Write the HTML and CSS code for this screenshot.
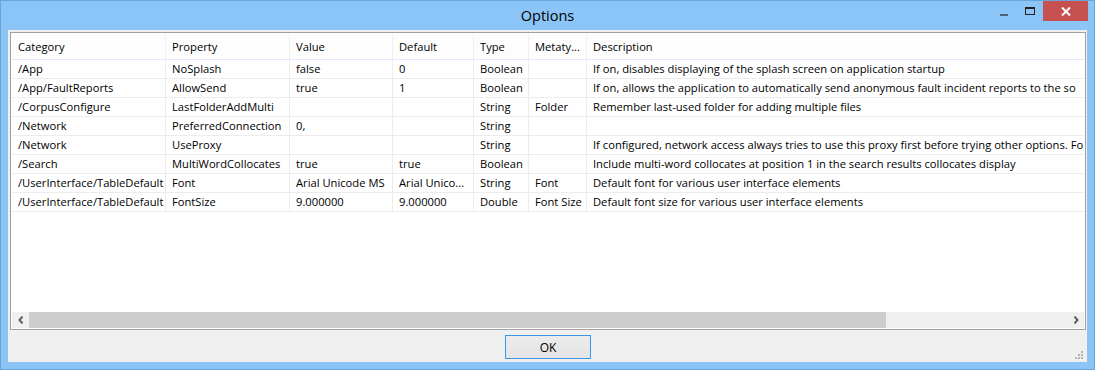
FILE: index.html
```html
<!DOCTYPE html>
<html lang="en">
<head>
  <meta charset="UTF-8" />
  <title>Options</title>
  <link rel="stylesheet" href="styles.css">
</head>
<body>

  <div class="window">

    <!-- TITLE BAR -->
    <div class="titlebar">
      <span></span>
      <span class="title">Options</span>
      <div class="controls">
        <div class="ctl min"><span class="min-bar"></span></div>
        <div class="ctl max"><span class="max-box"></span></div>
        <div class="ctl close">
          <svg width="10" height="9" viewBox="0 0 10 9">
            <path d="M1 0.5 L9 8.5 M9 0.5 L1 8.5" stroke="#fff" stroke-width="2" fill="none"/>
          </svg>
        </div>
      </div>
    </div>

    <!-- CLIENT AREA -->
    <div class="client">
      <div class="frame">
        <div class="table">
          <div class="row head">
            <div class="cell">Category</div>
            <div class="cell">Property</div>
            <div class="cell">Value</div>
            <div class="cell">Default</div>
            <div class="cell">Type</div>
            <div class="cell">Metaty...</div>
            <div class="cell">Description</div>
          </div>
          <div class="row">
            <div class="cell">/App</div>
            <div class="cell">NoSplash</div>
            <div class="cell">false</div>
            <div class="cell">0</div>
            <div class="cell">Boolean</div>
            <div class="cell"></div>
            <div class="cell">If on, disables displaying of the splash screen on application startup</div>
          </div>
          <div class="row">
            <div class="cell">/App/FaultReports</div>
            <div class="cell">AllowSend</div>
            <div class="cell">true</div>
            <div class="cell">1</div>
            <div class="cell">Boolean</div>
            <div class="cell"></div>
            <div class="cell">If on, allows the application to automatically send anonymous fault incident reports to the so</div>
          </div>
          <div class="row">
            <div class="cell">/CorpusConfigure</div>
            <div class="cell">LastFolderAddMulti</div>
            <div class="cell"></div>
            <div class="cell"></div>
            <div class="cell">String</div>
            <div class="cell">Folder</div>
            <div class="cell">Remember last-used folder for adding multiple files</div>
          </div>
          <div class="row">
            <div class="cell">/Network</div>
            <div class="cell">PreferredConnection</div>
            <div class="cell">0,</div>
            <div class="cell"></div>
            <div class="cell">String</div>
            <div class="cell"></div>
            <div class="cell"></div>
          </div>
          <div class="row">
            <div class="cell">/Network</div>
            <div class="cell">UseProxy</div>
            <div class="cell"></div>
            <div class="cell"></div>
            <div class="cell">String</div>
            <div class="cell"></div>
            <div class="cell">If configured, network access always tries to use this proxy first before trying other options. Fo</div>
          </div>
          <div class="row">
            <div class="cell">/Search</div>
            <div class="cell">MultiWordCollocates</div>
            <div class="cell">true</div>
            <div class="cell">true</div>
            <div class="cell">Boolean</div>
            <div class="cell"></div>
            <div class="cell">Include multi-word collocates at position 1 in the search results collocates display</div>
          </div>
          <div class="row">
            <div class="cell">/UserInterface/TableDefault</div>
            <div class="cell">Font</div>
            <div class="cell">Arial Unicode MS</div>
            <div class="cell">Arial Unico...</div>
            <div class="cell">String</div>
            <div class="cell">Font</div>
            <div class="cell">Default font for various user interface elements</div>
          </div>
          <div class="row">
            <div class="cell">/UserInterface/TableDefault</div>
            <div class="cell">FontSize</div>
            <div class="cell">9.000000</div>
            <div class="cell">9.000000</div>
            <div class="cell">Double</div>
            <div class="cell">Font Size</div>
            <div class="cell">Default font size for various user interface elements</div>
          </div>
        </div>

        <!-- HORIZONTAL SCROLLBAR -->
        <div class="hscroll">
          <div class="arrow">
            <svg width="6" height="8" viewBox="0 0 6 8"><path d="M4.5 0.5 L1.5 4 L4.5 7.5" stroke="#606060" stroke-width="2" fill="none"/></svg>
          </div>
          <div class="track"><div class="thumb"></div></div>
          <div class="arrow">
            <svg width="6" height="8" viewBox="0 0 6 8"><path d="M1.5 0.5 L4.5 4 L1.5 7.5" stroke="#606060" stroke-width="2" fill="none"/></svg>
          </div>
        </div>
      </div>

      <div class="buttons">
        <button class="ok">OK</button>
      </div>

      <!-- size grip -->
      <svg class="grip" width="9" height="9" viewBox="0 0 9 9" fill="#b4b4b4">
        <rect x="6" y="0" width="2" height="2"/>
        <rect x="3" y="3" width="2" height="2"/>
        <rect x="6" y="3" width="2" height="2"/>
        <rect x="0" y="6" width="2" height="2"/>
        <rect x="3" y="6" width="2" height="2"/>
        <rect x="6" y="6" width="2" height="2"/>
      </svg>
    </div>

  </div>

</body>
</html>
```

FILE: styles.css
```css
body {
  margin: 0;
  font-family: 'Open Sans', 'Noto Sans', sans-serif;
  font-size: 11.2px;
  color: #000;
  background: #fff;
}
.window {
  width: 1095px;
  height: 370px;
  box-sizing: border-box;
  background: #8bc5f7;
  border: 1px solid #6da4d8;
  padding: 0 7px 7px 7px;
  display: flex;
  flex-direction: column;
}
.titlebar {
  height: 29px;
  display: grid;
  grid-template-columns: 1fr auto 1fr;
  align-items: start;
}
.title {
  font-size: 14.5px;
  margin-top: 5px;
  color: #000;
}
.controls {
  justify-self: end;
  display: flex;
  margin-right: -1px;
}
.ctl {
  height: 20px;
  display: flex;
  align-items: center;
  justify-content: center;
}
.min, .max {
  width: 26px;
}
.min-bar {
  width: 8px;
  height: 2px;
  background: #4d6178;
  margin-top: 7px;
}
.max-box {
  width: 8px;
  height: 5px;
  border: 1px solid #222;
  border-top-width: 2px;
  margin-top: -1px;
}
.close {
  width: 45px;
  background: #c75050;
}
.client {
  position: relative;
  flex: 1;
  background: #f0f0f0;
  display: flex;
  flex-direction: column;
  padding: 2px 1px 0 2px;
}
.frame {
  flex: 1;
  border: 1px solid #a0a0a0;
  background: #fff;
  padding: 1px;
  display: flex;
  flex-direction: column;
  min-height: 0;
}
.table {
  flex: 1;
  overflow: hidden;
}
.row {
  display: grid;
  grid-template-columns: 154px 124px 103px 81px 55px 58px 1fr;
  height: 19px;
  box-sizing: border-box;
  border-bottom: 1px solid #ececec;
}
.row.head {
  height: 26px;
  background: #fdfdfd;
  border-bottom: 1px solid #dfe8f4;
}
.cell {
  padding-left: 6px;
  border-right: 1px solid #ececec;
  white-space: nowrap;
  overflow: hidden;
  line-height: 18px;
}
.head .cell {
  line-height: 25px;
  border-right-color: #f0f0f0;
}
.cell:last-child {
  border-right: none;
}
.hscroll {
  height: 16px;
  display: flex;
  background: #f0f0f0;
}
.arrow {
  width: 17px;
  display: flex;
  align-items: center;
  justify-content: center;
}
.track {
  flex: 1;
}
.thumb {
  width: 857px;
  height: 16px;
  background: #cdcdcd;
}
.buttons {
  height: 32px;
  display: flex;
  justify-content: center;
  align-items: flex-start;
}
.ok {
  margin-top: 5px;
  width: 86px;
  height: 24px;
  font-family: inherit;
  font-size: 12px;
  background: linear-gradient(to bottom, #ececec, #e4e4e4);
  border: 1px solid #3c96e6;
  border-radius: 0;
  color: #000;
}
.grip {
  position: absolute;
  right: 3px;
  bottom: 2px;
}
```
